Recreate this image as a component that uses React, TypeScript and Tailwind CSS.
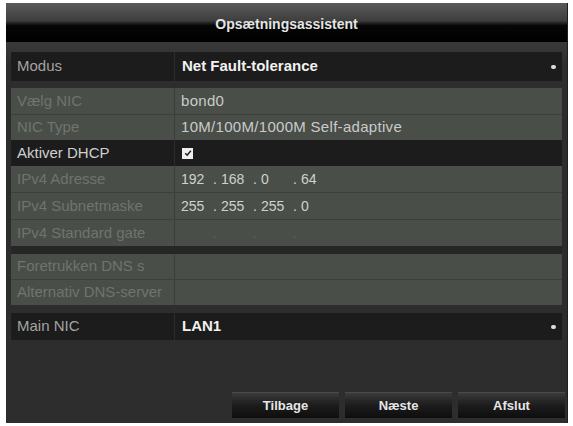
const font = { fontFamily: '"Liberation Sans", Arial, sans-serif' };

const Arrow = () => (
  <div className="w-[5px] h-[4px] rounded-full bg-[#dcdcdc] mr-[6px] blur-[0.3px]" />
);

const DarkRow = ({ label, value, arrow, bright }: { label: string; value: React.ReactNode; arrow?: boolean; bright?: boolean }) => (
  <div className="flex h-full bg-[#1c1c1c]">
    <div className={`w-[164px] flex items-center pl-[6px] text-[15px] border-r border-[#2c2c2c] ${bright ? "text-[#cfcfcf]" : "text-[#a3a3a3]"}`}>
      {label}
    </div>
    <div className="flex-1 flex items-center justify-between pl-[7px]">
      <div className="text-[15px] font-bold text-[#f2f2f2]">{value}</div>
      {arrow && <Arrow />}
    </div>
  </div>
);

const GrayRow = ({ label, value, last }: { label: string; value?: React.ReactNode; last?: boolean }) => (
  <div className={`flex flex-1 bg-[#4a4e49] ${last ? "" : "border-b border-[#3c3f3b]"}`}>
    <div className="w-[164px] flex items-center pl-[6px] text-[15px] text-[#6f746e] border-r border-[#3a3d39] whitespace-nowrap overflow-hidden">
      {label}
    </div>
    <div className="flex-1 flex items-center pl-[6px] text-[15px] tracking-[0.3px] text-[#c9cbc8]">{value}</div>
  </div>
);

const Ip = ({ parts, faint }: { parts: string[]; faint?: boolean }) => (
  <div className={`flex text-[14px] tracking-normal ${faint ? "text-[#5c605b]" : "text-[#cfd1ce]"}`}>
    {parts.map((p, i) => (
      <div key={i} className={`${i === 0 ? "w-[32px]" : "w-[40px]"} flex`}>
        {i > 0 && <span className="w-[8px]">.</span>}
        <span>{p}</span>
      </div>
    ))}
  </div>
);

const Button = ({ label }: { label: string }) => (
  <div className="w-[107px] h-[26px] flex items-center justify-center bg-gradient-to-b from-[#3a3a3a] via-[#1c1c1c] to-[#0e0e0e] border-t border-[#4a4a4a] text-[13px] font-bold text-[#e6e6e6]">
    {label}
  </div>
);

export default function App() {
  return (
    <div className="w-[573px] h-[426px] bg-white pt-[3px] pl-[6px] pr-[5px] pb-[3px]" style={font}>
      <div className="h-full flex flex-col bg-[#2d2d2d] border-r border-[#1e1e1e]">
        <div className="h-[39px] flex items-center justify-center pt-[4px] bg-[linear-gradient(to_bottom,#5a5a5a_0%,#3e3e3e_45%,#060606_58%,#000_100%)]">
          <span className="text-[14px] font-bold text-[#e4e4e4]">Opsætningsassistent</span>
        </div>
        <div className="flex-1 flex flex-col px-[5px] pt-[10px] bg-gradient-to-b from-[#3a3a3a] via-[#2d2d2d] via-[6%] to-[#2d2d2d]">
          <div className="h-[29px]">
            <DarkRow label="Modus" value="Net Fault-tolerance" arrow />
          </div>
          <div className="h-[7px]" />
          <div className="h-[52px] flex flex-col">
            <GrayRow label="Vælg NIC" value="bond0" />
            <GrayRow label="NIC Type" value="10M/100M/1000M Self-adaptive" last />
          </div>
          <div className="h-[26px]">
            <DarkRow
              label="Aktiver DHCP"
              bright
              value={
                <div className="w-[11px] h-[11px] bg-[#eeeeee] flex items-center justify-center">
                  <svg viewBox="0 0 10 10" className="w-[8px] h-[8px]">
                    <path d="M1.5 5.2 L4 7.6 L8.6 2.2" fill="none" stroke="#222" strokeWidth="1.8" />
                  </svg>
                </div>
              }
            />
          </div>
          <div className="h-[80px] flex flex-col">
            <GrayRow label="IPv4 Adresse" value={<Ip parts={["192", "168", "0", "64"]} />} />
            <GrayRow label="IPv4 Subnetmaske" value={<Ip parts={["255", "255", "255", "0"]} />} />
            <GrayRow label="IPv4 Standard gate" value={<Ip parts={["", "", "", ""]} faint />} last />
          </div>
          <div className="h-[8px] bg-[#262626]" />
          <div className="h-[51px] flex flex-col">
            <GrayRow label="Foretrukken DNS s" />
            <GrayRow label="Alternativ DNS-server" last />
          </div>
          <div className="h-[8px]" />
          <div className="h-[27px]">
            <DarkRow label="Main NIC" value="LAN1" arrow />
          </div>
          <div className="flex-1 flex items-end justify-end gap-[6px] pb-[5px] -mr-[3px]">
            <Button label="Tilbage" />
            <Button label="Næste" />
            <Button label="Afslut" />
          </div>
        </div>
      </div>
    </div>
  );
}
